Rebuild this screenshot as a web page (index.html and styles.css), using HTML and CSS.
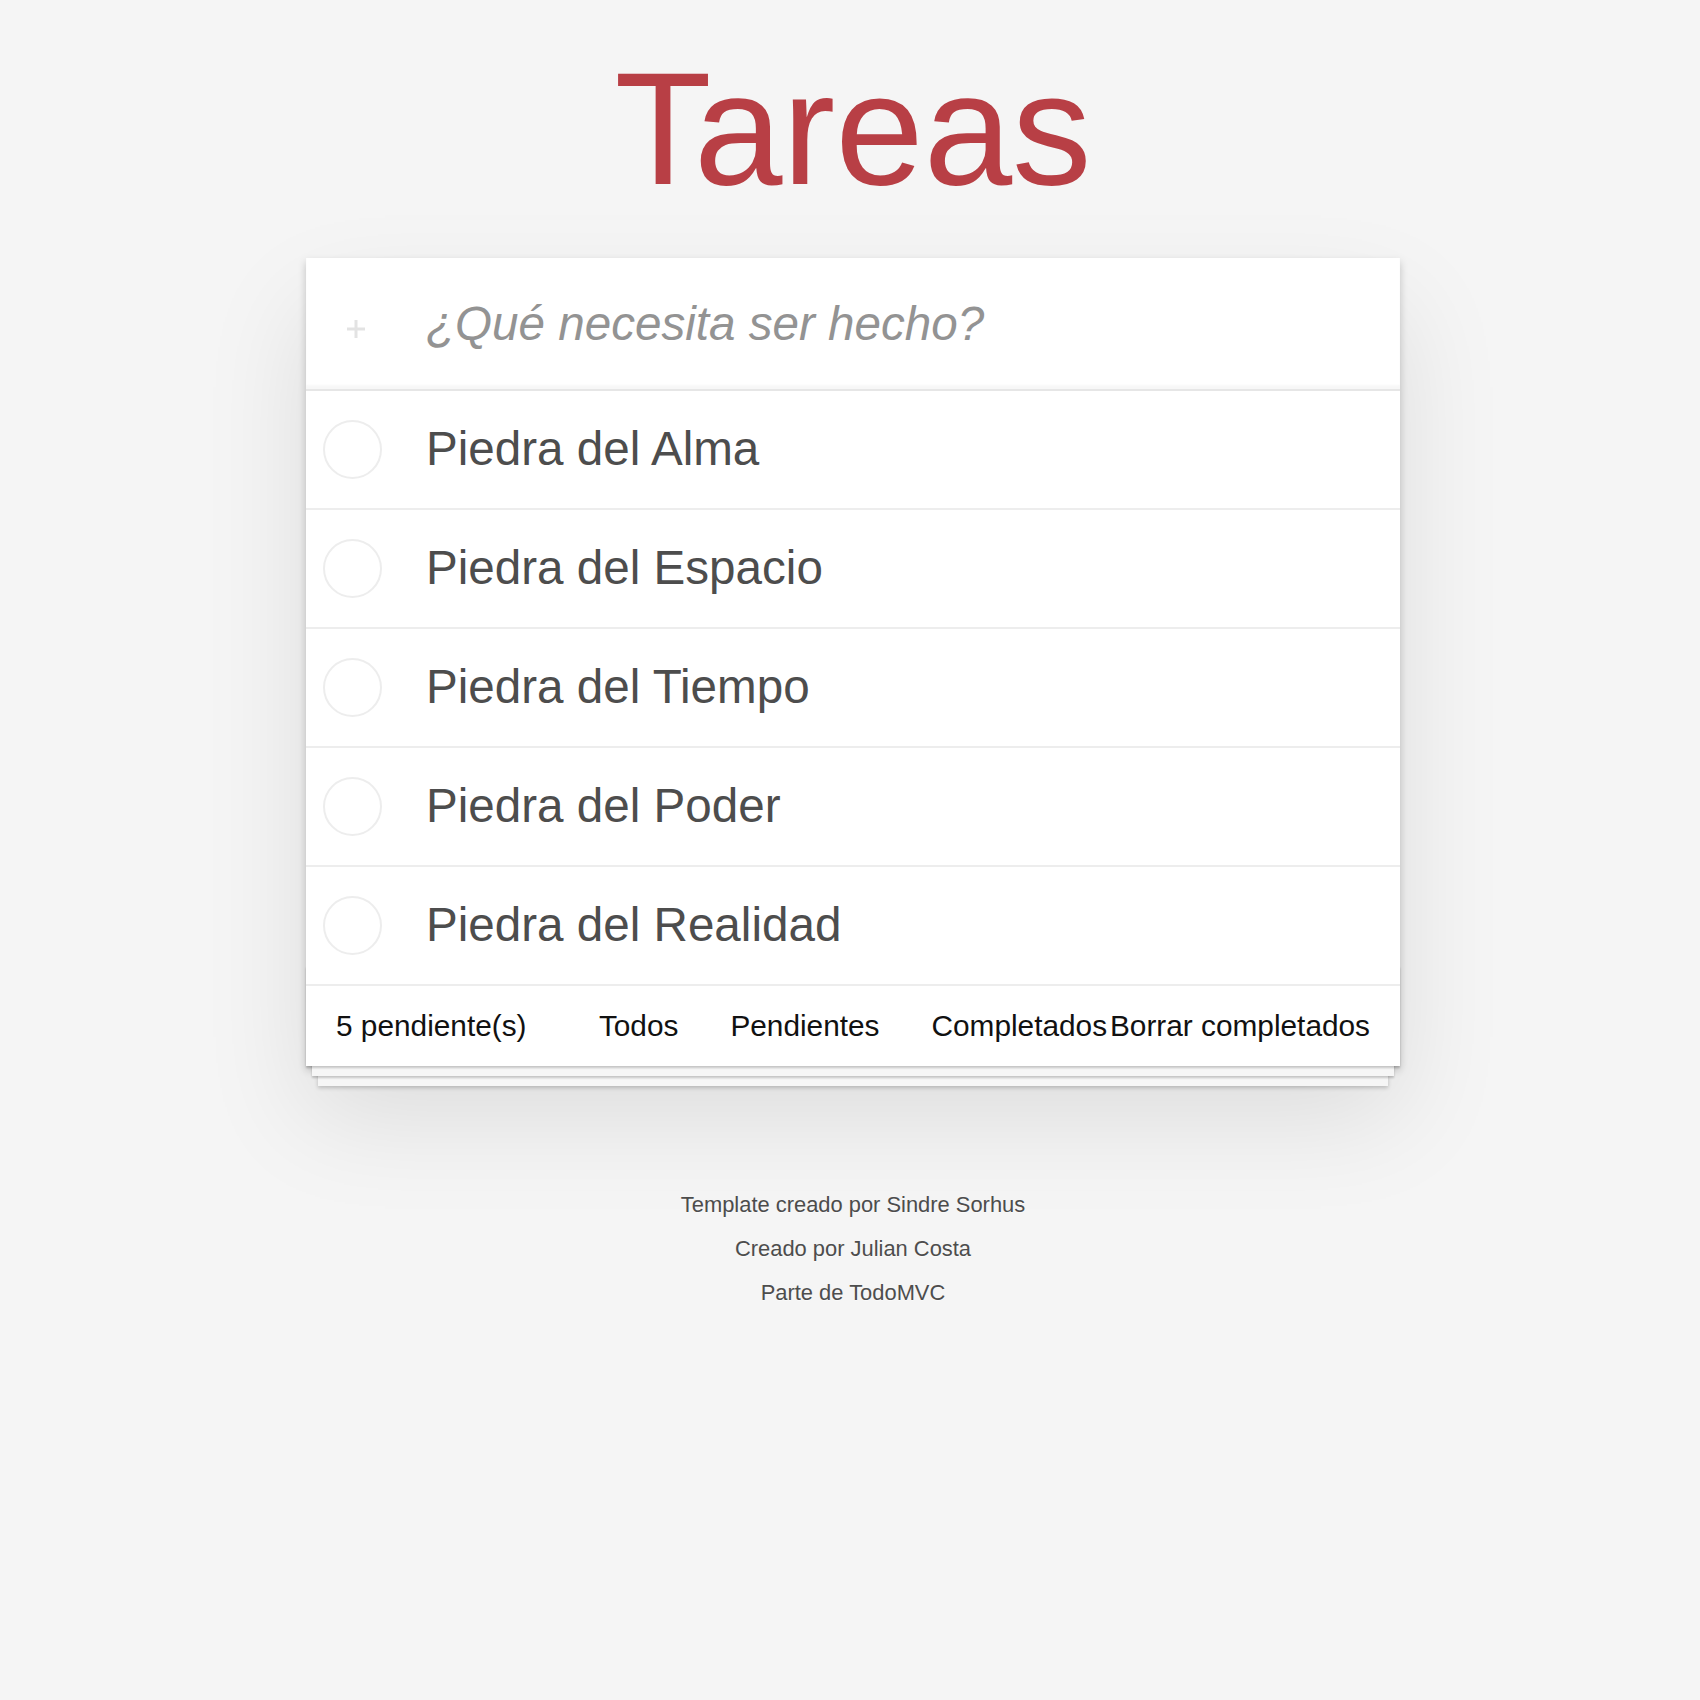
FILE: index.html
```html
<!DOCTYPE html>
<html lang="es">
<head>
<meta charset="utf-8">
<title>Tareas</title>
<link rel="stylesheet" href="styles.css">
</head>
<body>
<div class="page">
  <h1 class="title">Tareas</h1>
  <section class="todoapp">
    <header class="new-row">
      <span class="plus">
        <svg width="20" height="20" viewBox="0 0 20 20"><path d="M10 1v18M1 10h18" stroke="#e3e3e3" stroke-width="3" fill="none"/></svg>
      </span>
      <input class="new-todo" type="text" placeholder="¿Qué necesita ser hecho?">
    </header>
    <ul class="todo-list">
      <li class="todo"><span class="toggle"></span><label class="todo-label">Piedra del Alma</label></li>
      <li class="todo"><span class="toggle"></span><label class="todo-label">Piedra del Espacio</label></li>
      <li class="todo"><span class="toggle"></span><label class="todo-label">Piedra del Tiempo</label></li>
      <li class="todo"><span class="toggle"></span><label class="todo-label">Piedra del Poder</label></li>
      <li class="todo"><span class="toggle"></span><label class="todo-label">Piedra del Realidad</label></li>
    </ul>
    <footer class="footer">
      <span class="count">5 pendiente(s)</span>
      <ul class="filters">
        <li><a class="filter">Todos</a></li>
        <li><a class="filter">Pendientes</a></li>
        <li><a class="filter">Completados</a></li>
      </ul>
      <span class="clear">Borrar completados</span>
    </footer>
  </section>
  <footer class="info">
    <p>Template creado por Sindre Sorhus</p>
    <p>Creado por Julian Costa</p>
    <p>Parte de TodoMVC</p>
  </footer>
</div>
</body>
</html>
```

FILE: styles.css
```css
html, body {
  margin: 0;
  padding: 0;
}
body {
  background: #f5f5f5;
  font-family: "Liberation Sans", Arial, sans-serif;
  color: #4d4d4d;
  padding-left: 6px;
}
.page {
  width: 1094px;
  margin: 0 auto;
}
.title {
  margin: 50px 0 49px;
  font-size: 159px;
  line-height: 1;
  font-weight: 400;
  text-align: center;
  color: #b83f45;
}
.todoapp {
  position: relative;
  background: #fff;
  box-shadow: 0 4px 8px 0 rgba(0, 0, 0, 0.2), 0 50px 100px 0 rgba(0, 0, 0, 0.1);
}
.new-row {
  display: flex;
  height: 131px;
  box-shadow: inset 0 -4px 2px rgba(0, 0, 0, 0.03);
}
.plus {
  display: block;
  width: 20px;
  height: 20px;
  margin: 61px 0 0 40px;
}
.plus svg {
  display: block;
}
.new-todo {
  flex: 1;
  min-width: 0;
  margin: 0 0 0 60px;
  height: 131px;
  box-sizing: border-box;
  padding: 0;
  border: 0;
  outline: none;
  background: transparent;
  font-family: "Liberation Sans", Arial, sans-serif;
  font-size: 47.6px;
  color: #4d4d4d;
}
.new-todo::placeholder {
  font-style: italic;
  color: #939393;
}
.todo-list {
  list-style: none;
  margin: 0;
  padding: 0;
  border-top: 2px solid #e6e6e6;
}
.todo {
  display: flex;
  align-items: center;
  border-bottom: 2px solid #ededed;
}
.toggle {
  display: block;
  width: 59px;
  height: 59px;
  box-sizing: border-box;
  border: 2px solid #ededed;
  border-radius: 50%;
  margin-left: 17px;
  flex: none;
}
.todo-label {
  display: block;
  margin-left: 44px;
  padding: 29px 0 31px;
  font-size: 47.6px;
  line-height: 57px;
  color: #4d4d4d;
}
.footer {
  position: relative;
  height: 80px;
  padding: 0 30px;
  display: grid;
  grid-template-columns: minmax(0, 1fr) auto minmax(0, 1fr);
  align-items: center;
  font-size: 29.8px;
  color: #111;
  white-space: nowrap;
}
.footer::before {
  content: "";
  position: absolute;
  left: 0;
  right: 0;
  bottom: 0;
  height: 100px;
  box-shadow: 0 2px 2px rgba(0, 0, 0, 0.2),
    0 16px 0 -6px #f6f6f6,
    0 18px 2px -6px rgba(0, 0, 0, 0.2),
    0 32px 0 -12px #f6f6f6,
    0 34px 4px -12px rgba(0, 0, 0, 0.2);
}
.count {
  justify-self: start;
  position: relative;
}
.filters {
  list-style: none;
  margin: 0;
  padding: 0;
  display: flex;
  gap: 8px;
  position: relative;
}
.filter {
  display: block;
  margin: 6px;
  padding: 6px 14px;
  border: 2px solid transparent;
  color: #111;
}
.clear {
  justify-self: end;
  position: relative;
}
.info {
  margin-top: 128px;
  text-align: center;
  font-size: 21.9px;
  color: #4d4d4d;
  text-shadow: 0 1px 0 rgba(255, 255, 255, 0.5);
}
.info p {
  margin: 0 0 22px;
  line-height: 1;
}
```
